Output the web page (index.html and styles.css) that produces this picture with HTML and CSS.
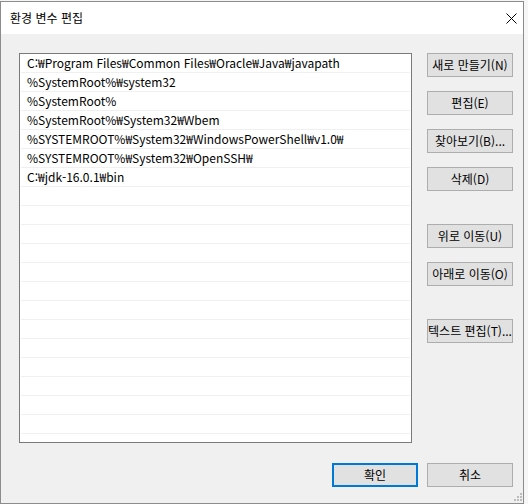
FILE: index.html
```html
<!DOCTYPE html>
<html lang="ko">
<head>
<meta charset="utf-8">
<title>환경 변수 편집</title>
<link rel="stylesheet" href="styles.css">
</head>
<body>
<div class="window">
  <div class="titlebar">
    <span class="title">환경 변수 편집</span>
    <span class="close">
      <svg width="11" height="11" viewBox="0 0 11 11"><path d="M0.5 0.5 L10.5 10.5 M10.5 0.5 L0.5 10.5" stroke="#000" stroke-width="1" fill="none"/></svg>
    </span>
  </div>
  <div class="body">
    <div class="main">
      <div class="list">
        <div class="row">C:₩Program Files₩Common Files₩Oracle₩Java₩javapath</div>
        <div class="row">%SystemRoot%₩system32</div>
        <div class="row">%SystemRoot%</div>
        <div class="row">%SystemRoot%₩System32₩Wbem</div>
        <div class="row">%SYSTEMROOT%₩System32₩WindowsPowerShell₩v1.0₩</div>
        <div class="row">%SYSTEMROOT%₩System32₩OpenSSH₩</div>
        <div class="row">C:₩jdk-16.0.1₩bin</div>
        <div class="row"></div><div class="row"></div><div class="row"></div>
        <div class="row"></div><div class="row"></div><div class="row"></div>
        <div class="row"></div><div class="row"></div><div class="row"></div>
        <div class="row"></div><div class="row"></div><div class="row"></div>
        <div class="row"></div>
      </div>
      <div class="side">
        <div class="group">
          <button class="btn">새로 만들기(N)</button>
          <button class="btn">편집(E)</button>
          <button class="btn">찾아보기(B)...</button>
          <button class="btn">삭제(D)</button>
        </div>
        <div class="group">
          <button class="btn">위로 이동(U)</button>
          <button class="btn">아래로 이동(O)</button>
        </div>
        <div class="group">
          <button class="btn">텍스트 편집(T)...</button>
        </div>
      </div>
    </div>
    <div class="footer">
      <button class="btn primary">확인</button>
      <button class="btn">취소</button>
    </div>
    <svg class="grip" width="9" height="9" viewBox="0 0 9 9">
      <rect x="6" y="0" width="2" height="2" fill="#bcbcbc"/>
      <rect x="3" y="3" width="2" height="2" fill="#bcbcbc"/>
      <rect x="6" y="3" width="2" height="2" fill="#bcbcbc"/>
      <rect x="0" y="6" width="2" height="2" fill="#bcbcbc"/>
      <rect x="3" y="6" width="2" height="2" fill="#bcbcbc"/>
      <rect x="6" y="6" width="2" height="2" fill="#bcbcbc"/>
    </svg>
  </div>
</div>
</body>
</html>
```

FILE: styles.css
```css
html, body {
  margin: 0;
  padding: 0;
}
body {
  background: #f6f6f6;
  font-family: "Noto Sans CJK KR", "Noto Sans", sans-serif;
  font-size: 12px;
  color: #000;
}
.window {
  box-sizing: border-box;
  width: 524px;
  height: 503px;
  margin-top: 1px;
  border: 1px solid #8c8c8c;
  background: #f0f0f0;
  display: flex;
  flex-direction: column;
}
.titlebar {
  height: 32px;
  background: #fff;
  display: flex;
  align-items: center;
  justify-content: space-between;
  flex: none;
}
.title {
  padding-left: 9px;
  font-size: 12px;
  line-height: 16px;
}
.close {
  width: 11px;
  height: 11px;
  margin-right: 6px;
  margin-top: 1px;
  display: block;
}
.close svg { display: block; }
.body {
  position: relative;
  flex: 1;
  padding: 19px 0 0 18px;
}
.main {
  display: flex;
  gap: 15px;
}
.list {
  box-sizing: border-box;
  width: 393px;
  height: 390px;
  border: 1px solid #7a7a7a;
  background: #fff;
  padding: 0 1px;
  overflow: hidden;
}
.row {
  box-sizing: border-box;
  height: 19px;
  border-bottom: 1px solid #f0f0f0;
  padding-left: 6px;
  line-height: 18px;
  white-space: nowrap;
}
.side {
  display: flex;
  flex-direction: column;
  gap: 33px;
}
.group {
  display: flex;
  flex-direction: column;
  gap: 14px;
}
.btn {
  box-sizing: border-box;
  width: 86px;
  height: 24px;
  margin: 0;
  padding: 0;
  border: 1px solid #adadad;
  background: #e1e1e1;
  font-family: inherit;
  font-size: 12px;
  color: #000;
  white-space: nowrap;
  line-height: 20px;
}
.footer {
  display: flex;
  justify-content: flex-end;
  gap: 9px;
  padding-right: 10px;
  margin-top: 20px;
}
.primary {
  border: 2px solid #0078d7;
}
.grip {
  position: absolute;
  right: 0;
  bottom: 1px;
  display: block;
}
```
